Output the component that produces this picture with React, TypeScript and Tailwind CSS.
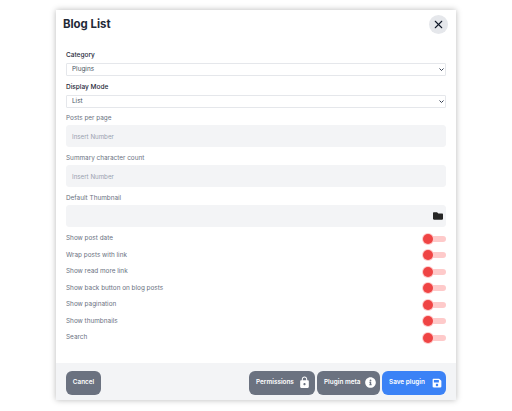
import { FaFolder, FaInfoCircle, FaSave } from "react-icons/fa";
import { MdLock } from "react-icons/md";
import { X } from "lucide-react";

const font = { fontFamily: "Inter, sans-serif" };

const toggles = [
  "Show post date",
  "Wrap posts with link",
  "Show read more link",
  "Show back button on blog posts",
  "Show pagination",
  "Show thumbnails",
  "Search",
];

function SelectField({ label, value, top }: { label: string; value: string; top: string }) {
  return (
    <div className={top}>
      <label className="block text-[6.5px] leading-[12px] font-medium text-gray-800">{label}</label>
      <div className="relative mt-[2px]">
        <select
          defaultValue={value}
          className="block h-[13px] w-full appearance-none rounded-[1px] border border-gray-200 bg-white pl-[5px] text-[6.4px] leading-[11px] text-gray-600"
        >
          <option>{value}</option>
        </select>
        <svg viewBox="0 0 10 6" className="pointer-events-none absolute right-[2px] top-[5px] h-[3px] w-[5px] text-gray-700">
          <path d="M1 1l4 4 4-4" fill="none" stroke="currentColor" strokeWidth="2" />
        </svg>
      </div>
    </div>
  );
}

function InputField({ label, top }: { label: string; top: string }) {
  return (
    <div className={top}>
      <label className="block text-[6.4px] leading-[12px] text-gray-500">{label}</label>
      <div className="mt-[1px] flex h-[22px] items-center rounded-[3px] border border-gray-100 bg-[#f3f4f6] px-[5px] pt-[1px] text-[6.2px] text-gray-400">
        Insert Number
      </div>
    </div>
  );
}

function ToggleRow({ label }: { label: string }) {
  return (
    <div className="flex h-[16.5px] items-center justify-between">
      <span className="pt-[1px] text-[6.4px] text-gray-500">{label}</span>
      <div className="flex h-[6px] w-[23px] items-center rounded-full bg-[#fecaca]">
        <div className="h-[10px] w-[10px] rounded-full bg-[#ef4444] ring-1 ring-[#fecaca]" />
      </div>
    </div>
  );
}

function FooterButton({ label, width, blue, icon }: { label: string; width: string; blue?: boolean; icon?: React.ReactNode }) {
  return (
    <button
      className={`flex h-[23.5px] items-center rounded-[6px] text-[6.4px] font-semibold whitespace-nowrap text-white ${
        icon ? "justify-between pl-[7px] pr-[4px]" : "justify-center"
      } ${width} ${blue ? "bg-[#3b82f6]" : "bg-[#6b7280]"}`}
    >
      {label}
      {icon}
    </button>
  );
}

export default function App() {
  return (
    <main className="flex h-[411px] justify-center bg-white pt-[10px]" style={font}>
      <div className="flex h-[390px] w-[400px] flex-col bg-white shadow-[0_0_6px_rgba(0,0,0,0.28)]">
        <div className="flex items-start justify-between pl-[7px] pr-[8px] pt-[5px]">
          <h1 className="mt-[1px] text-[11.4px] leading-[16px] font-bold text-[#1f2937]">Blog List</h1>
          <button className="flex h-[19px] w-[19px] items-center justify-center rounded-full bg-gray-200 text-gray-900">
            <X size={13} strokeWidth={2} />
          </button>
        </div>

        <div className="flex-1 px-[10px]">
          <SelectField label="Category" value="Plugins" top="mt-[15px]" />
          <SelectField label="Display Mode" value="List" top="mt-[5px]" />
          <InputField label="Posts per page" top="mt-[4px]" />
          <InputField label="Summary character count" top="mt-[5px]" />
          <div className="mt-[5px]">
            <label className="block text-[6.4px] leading-[12px] text-gray-500">Default Thumbnail</label>
            <div className="mt-[1px] flex h-[22px] items-center justify-end rounded-[3px] border border-gray-100 bg-[#f3f4f6] pr-[2px] text-[#262626]">
              <FaFolder size={10} />
            </div>
          </div>
          <div className="mt-[3.5px]">
            {toggles.map((t) => (
              <ToggleRow key={t} label={t} />
            ))}
          </div>
        </div>

        <div className="flex h-[37px] items-start justify-between bg-[#f3f4f6] px-[10px] pt-[8px]">
          <FooterButton label="Cancel" width="w-[35px]" />
          <div className="flex gap-[2px]">
            <FooterButton label="Permissions" width="w-[66px]" icon={<MdLock size={13} />} />
            <FooterButton label="Plugin meta" width="w-[63px]" icon={<FaInfoCircle size={11} />} />
            <FooterButton label="Save plugin" width="w-[64px]" blue icon={<FaSave size={10} />} />
          </div>
        </div>
      </div>
    </main>
  );
}
